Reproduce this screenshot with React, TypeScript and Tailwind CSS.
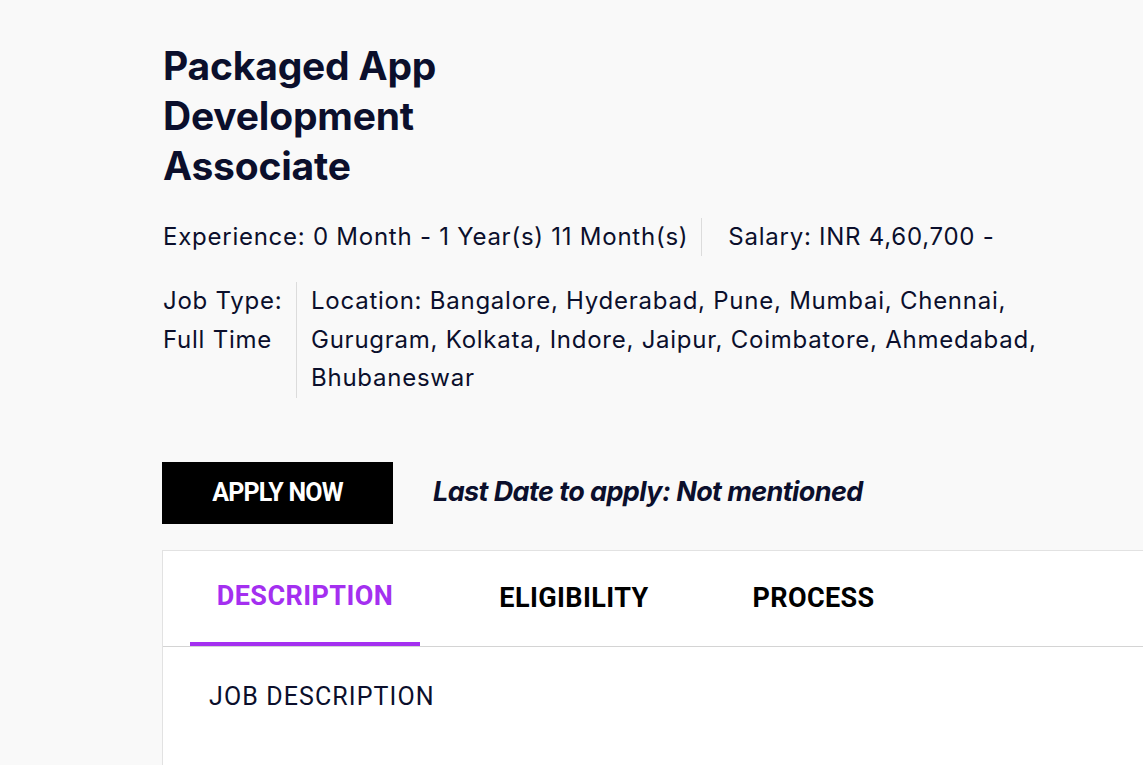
import React from 'react'

const tabs = ['DESCRIPTION', 'ELIGIBILITY', 'PROCESS']

export default function App() {
  return (
    <div className="w-[1143px] h-[765px] overflow-hidden bg-[#f9f9f9] font-['Inter',sans-serif] text-[#0b0f2c]">
      <div className="pl-[162px] pt-[41px]">
        {/* Title */}
        <h1 className="w-[320px] pl-px text-[39px] font-bold leading-[50px] tracking-[-0.2px]">
          Packaged App Development Associate
        </h1>

        {/* Meta */}
        <div className="mt-[27px] pl-px flex items-stretch text-[24px] leading-[38px] tracking-[0.75px]">
          <span className="pr-[13px]">Experience: 0 Month - 1 Year(s) 11 Month(s)</span>
          <span className="border-l border-[#dcdcdc] pl-[26px]">Salary: INR 4,60,700 -</span>
        </div>

        <div className="mt-[26px] pl-px flex text-[24px] leading-[38.5px] tracking-[0.75px]">
          <div className="w-[133px] pr-[10px]">Job Type: Full Time</div>
          <div className="w-[760px] border-l border-[#dcdcdc] pl-[14px]">
            Location: Bangalore, Hyderabad, Pune, Mumbai, Chennai, Gurugram, Kolkata, Indore, Jaipur, Coimbatore, Ahmedabad, Bhubaneswar
          </div>
        </div>

        {/* Apply */}
        <div className="mt-[64px] flex items-center">
          <button className="w-[231px] h-[62px] bg-black text-white font-['Roboto',sans-serif] font-bold text-[25px] tracking-[-0.8px]">
            APPLY NOW
          </button>
          <span className="ml-[40px] italic font-bold text-[27px] tracking-[-0.6px]">
            Last Date to apply: Not mentioned
          </span>
        </div>

        {/* Card */}
        <div className="mt-[26px] w-[1100px] bg-white border border-[#e2e2e2]">
          <div className="flex pl-[27px] border-b border-[#d4d4d4] font-['Roboto',sans-serif] font-bold text-[27px] tracking-[0.4px]">
            {tabs.map((t, i) => (
              <div
                key={t}
                className={`h-[95px] pt-px flex items-center justify-center ${i === 0 ? 'w-[230px] text-[#a42ff0] border-b-4 border-[#a42ff0]' : i === 1 ? 'w-[308px] text-black' : 'w-[171px] text-black'}`}
              >
                {t}
              </div>
            ))}
          </div>
          <div className="pl-[46px] pt-[31px] pb-[60px] font-['Roboto',sans-serif] text-[25px] tracking-[1.1px]">
            JOB DESCRIPTION
          </div>
        </div>
      </div>
    </div>
  )
}
